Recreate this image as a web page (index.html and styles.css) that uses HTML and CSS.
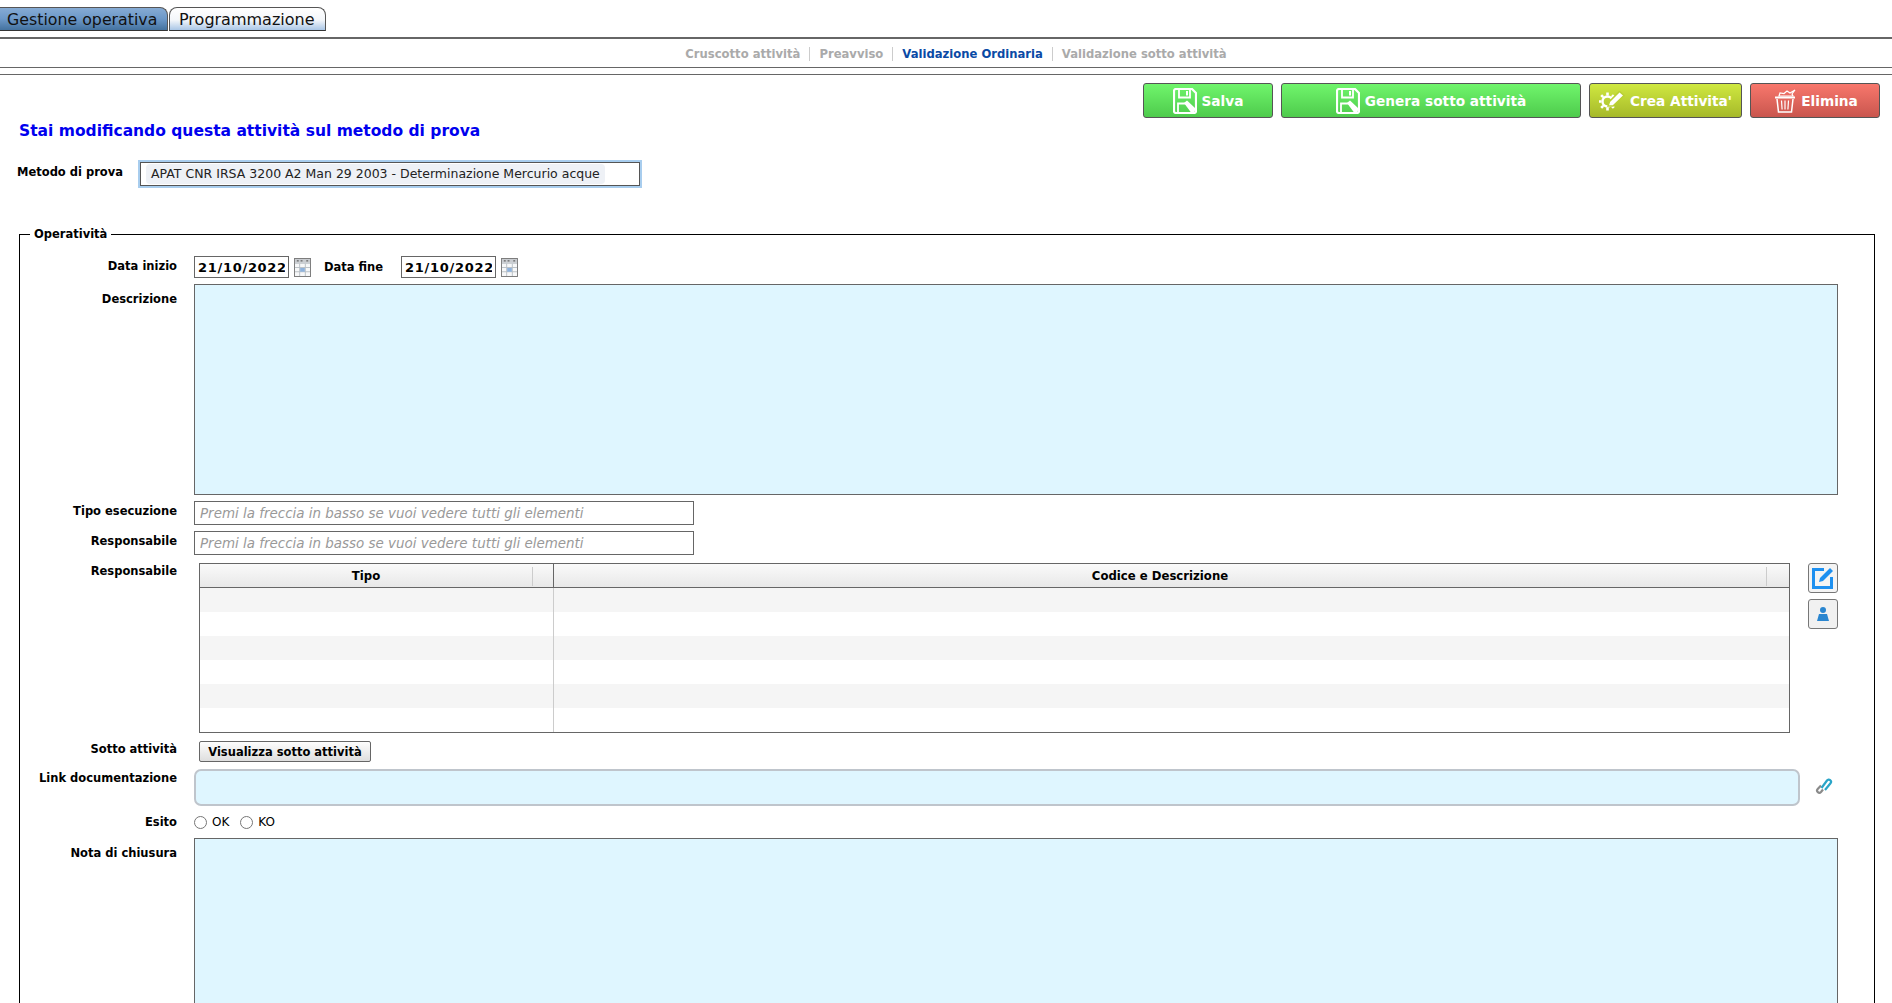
FILE: index.html
```html
<!DOCTYPE html>
<html lang="it">
  <head>
    <meta charset="UTF-8" />
    <title>Validazione Ordinaria</title>
    <link rel="stylesheet" href="styles.css">
  </head>
  <body>
    <div class="tabs">
      <a class="tab tab-active" href="#">Gestione operativa</a>
      <a class="tab tab-prog" href="#">Programmazione</a>
    </div>

    <div class="subnav">
      <a href="#">Cruscotto attività</a>
      <a href="#">Preavviso</a>
      <a class="current" href="#">Validazione Ordinaria</a>
      <a href="#">Validazione sotto attività</a>
    </div>

    <div class="toolbar">
      <button class="action green btn-salva">
        <svg class="action-icon" viewBox="0 0 24 26"><use href="#floppy" /></svg>
        Salva
      </button>
      <button class="action green btn-genera">
        <svg class="action-icon" viewBox="0 0 24 26"><use href="#floppy" /></svg>
        Genera sotto attività
      </button>
      <button class="action lime btn-crea">
        <svg class="icon-crea" viewBox="0 0 26 20">
          <circle cx="8.500" cy="10.500" r="5" fill="none" stroke="#fff" stroke-width="2.400" />
          <path d="M8.500 1.500v3M8.500 16.500v3M-.500 10.500h3M2.200 4.200l2 2M2.200 16.800l2-2M14.800 16.800l-2-2M14.800 4.200l-2 2" stroke="#fff" stroke-width="2.600" fill="none" />
          <path d="M9 15l1.500-4.500L20.500 .5l4.500 4L14 15z" fill="#fff" stroke="#b9d033" stroke-width="1.500" />
        </svg>
        Crea Attivita'
      </button>
      <button class="action red btn-elimina">
        <svg class="icon-elimina" viewBox="0 0 22 24">
          <path d="M1 8.500h20" stroke="#fff" stroke-width="2" fill="none" />
          <path d="M3 10l1.500 13h13L19 10" fill="none" stroke="#fff" stroke-width="1.500" />
          <path d="M7.500 11.500l.6 9M11 11.500v9M14.500 11.500l-.6 9" stroke="#fff" stroke-width="1.200" fill="none" />
          <path d="M5 7l1-3 4 .5L13 2l3 2 5-3-3 4 1 2z" fill="none" stroke="#fff" stroke-width="1.200" />
        </svg>
        Elimina
      </button>
    </div>

    <h1 class="title">Stai modificando questa attività sul metodo di prova</h1>

    <div class="metodo">
      <label class="metodo-label">Metodo di prova</label>
      <div class="metodo-box">
        <span class="chip">APAT CNR IRSA 3200 A2 Man 29 2003 - Determinazione Mercurio acque</span>
      </div>
    </div>

    <fieldset class="group">
      <legend>Operatività</legend>

      <div class="row row-date">
        <label class="lbl lbl-date">Data inizio</label>
        <input class="date" value="21/10/2022">
        <svg class="cal" viewBox="0 0 18 20"><use href="#calendar" /></svg>
        <label class="lbl-inline">Data fine</label>
        <input class="date" value="21/10/2022">
        <svg class="cal" viewBox="0 0 18 20"><use href="#calendar" /></svg>
      </div>

      <div class="row row-descr">
        <label class="lbl lbl-area">Descrizione</label>
        <textarea class="area area-descr"></textarea>
      </div>

      <div class="row row-combo">
        <label class="lbl lbl-combo">Tipo esecuzione</label>
        <input class="combo" placeholder="Premi la freccia in basso se vuoi vedere tutti gli elementi">
      </div>

      <div class="row row-combo">
        <label class="lbl lbl-combo">Responsabile</label>
        <input class="combo" placeholder="Premi la freccia in basso se vuoi vedere tutti gli elementi">
      </div>

      <div class="row row-grid">
        <label class="lbl lbl-top">Responsabile</label>
        <div class="grid">
          <div class="grid-head">
            <div class="cell-tipo"><span>Tipo</span></div>
            <div class="cell-cod"><span>Codice e Descrizione</span></div>
          </div>
          <div class="grid-row"><div class="cell-tipo"></div><div class="cell-cod"></div></div>
          <div class="grid-row"><div class="cell-tipo"></div><div class="cell-cod"></div></div>
          <div class="grid-row"><div class="cell-tipo"></div><div class="cell-cod"></div></div>
          <div class="grid-row"><div class="cell-tipo"></div><div class="cell-cod"></div></div>
          <div class="grid-row"><div class="cell-tipo"></div><div class="cell-cod"></div></div>
          <div class="grid-row"><div class="cell-tipo"></div><div class="cell-cod"></div></div>
        </div>
        <div class="side-btns">
          <button class="side-btn">
            <svg viewBox="0 0 24 24" width="24" height="24">
              <path d="M13 3.500H2.500v18h18V11" fill="none" stroke="#1e90f0" stroke-width="3" />
              <path d="M8 16l1-4L19 2l3 3-10 10z" fill="#1e90f0" />
            </svg>
          </button>
          <button class="side-btn side-btn-user">
            <svg viewBox="0 0 14 16" width="14" height="16">
              <circle cx="7" cy="4" r="3" fill="#2a86d0" />
              <path d="M3 8h8l2 7H1z" fill="#2a86d0" />
            </svg>
          </button>
        </div>
      </div>

      <div class="row row-sotto">
        <label class="lbl lbl-top">Sotto attività</label>
        <button class="plain-btn">Visualizza sotto attività</button>
      </div>

      <div class="row row-link">
        <label class="lbl lbl-link">Link documentazione</label>
        <input class="link-input">
        <svg class="clip" viewBox="0 0 18 18">
          <path d="M8 12.500l-2 2.500a2.200 2.200 0 0 1-3.300-3L6 8.500" fill="none" stroke="#8a8a8a" stroke-width="2.200" />
          <path d="M6.500 11l5.500-7.500a2.200 2.200 0 0 1 3.500 2.800L10 13" fill="none" stroke="#2aa5c8" stroke-width="2.200" />
        </svg>
      </div>

      <div class="row row-esito">
        <label class="lbl">Esito</label>
        <label class="radio"><input type="radio" name="esito"> OK</label>
        <label class="radio"><input type="radio" name="esito"> KO</label>
      </div>

      <div class="row">
        <label class="lbl lbl-area">Nota di chiusura</label>
        <textarea class="area area-nota"></textarea>
      </div>
    </fieldset>

    <svg class="defs" width="0" height="0">
      <defs>
        <g id="floppy">
          <path d="M1 3a2 2 0 0 1 2-2h16l4 4v18a2 2 0 0 1-2 2H3a2 2 0 0 1-2-2z" fill="none" stroke="#fff" stroke-width="2.200" />
          <path d="M6 1.500v8h11v-8" fill="none" stroke="#fff" stroke-width="1.800" />
          <path d="M13 3h2v4.500h-2z" fill="#fff" />
          <path d="M5 25v-9.500h9" fill="none" stroke="#fff" stroke-width="1.800" />
          <path d="M11 15l3-2.500 8.500 8-1 3.500-3.500 .5z" fill="#fff" />
        </g>
        <g id="calendar">
          <rect x="0.500" y="0.500" width="17" height="19" fill="#f7f8f9" stroke="#777" />
          <rect x="1" y="1" width="16" height="4" fill="#c9ccd0" />
          <path d="M3 3h2M7 3h2M13 3h2" stroke="#444" fill="none" />
          <path d="M1 5.500h16M1 10h16M1 14.500h16M6 6v13M12 6v13" stroke="#b9bfc5" fill="none" />
          <rect x="6.500" y="10.500" width="5" height="4" fill="#8fb2dc" />
        </g>
      </defs>
    </svg>
  </body>
</html>
```

FILE: styles.css
```css
html, body {
  height: 100%;
  overflow: hidden;
}

body {
  margin: 0;
  background: #fff;
  color: #000;
  font-family: "DejaVu Sans", Verdana, sans-serif;
  font-size: 11.500px;
}

/* top tabs */
.tabs {
  display: flex;
  height: 24px;
  padding-top: 7px;
  padding-bottom: 6px;
  border-bottom: 2px solid #666;
}

.tab {
  display: block;
  box-sizing: border-box;
  height: 24px;
  margin-right: 1px;
  padding: 0 0 0 9px;
  border: 1px solid #555;
  border-bottom-color: #333;
  border-radius: 8px 8px 0 0;
  background: linear-gradient(#ffffff, #f3f6fa 55%, #a9c6e6);
  color: #111;
  font-size: 16px;
  line-height: 24px;
  white-space: nowrap;
  overflow: hidden;
  text-decoration: none;
}

.tab-active {
  width: 168px;
  padding-left: 7px;
  border-left: 0;
  border-radius: 0 8px 0 0;
  background: linear-gradient(#86abd4, #6c98c8 50%, #44729f);
  font-size: 15.800px;
}

.tab-prog {
  width: 157px;
}

/* second level nav */
.subnav {
  display: flex;
  justify-content: center;
  align-items: center;
  height: 26px;
  padding-top: 2px;
  padding-left: 20px;
  border-bottom: 1px solid #666;
  font-size: 11.600px;
  font-weight: bold;
}

.subnav a {
  padding: 0 9px;
  border-right: 1px solid #ccc;
  color: #aaa;
  text-decoration: none;
}

.subnav a:last-child {
  border-right: 0;
}

.subnav a.current {
  color: #0a4aa5;
}

/* action buttons */
.toolbar {
  display: flex;
  justify-content: flex-end;
  gap: 8px;
  height: 35px;
  margin-top: 6px;
  padding-top: 8px;
  padding-right: 12px;
  border-top: 1px solid #666;
}

.action {
  display: flex;
  align-items: center;
  justify-content: center;
  gap: 5px;
  box-sizing: border-box;
  height: 35px;
  padding: 0;
  border: 1px solid #555;
  border-radius: 3px;
  color: #fff;
  font-family: inherit;
  font-size: 13.700px;
  font-weight: bold;
}

.action-icon {
  width: 24px;
  height: 26px;
}

.icon-crea {
  width: 26px;
  height: 20px;
}

.icon-elimina {
  width: 22px;
  height: 24px;
}

.green {
  background: linear-gradient(#70f56c, #4ecb4c);
}

.lime {
  background: linear-gradient(#cfe840, #a6b92a);
}

.red {
  background: linear-gradient(#f8776c, #c9564e);
}

.btn-salva {
  width: 130px;
}

.btn-genera {
  width: 300px;
}

.btn-crea {
  width: 153px;
}

.btn-elimina {
  width: 130px;
  padding-left: 2px;
}

.title {
  margin: 3px 0 0 19px;
  color: #0000ee;
  font-size: 15.500px;
  line-height: 20px;
}

.metodo {
  display: flex;
  align-items: flex-start;
  margin-top: 21px;
}

.metodo-label {
  width: 122px;
  margin-top: 3px;
  padding-left: 17px;
  box-sizing: border-box;
  font-weight: bold;
  white-space: nowrap;
}

.metodo-box {
  box-sizing: border-box;
  width: 500px;
  height: 24px;
  margin-left: 18px;
  padding: 1px 5px;
  border: 1px solid #555;
  box-shadow: 0 0 0 2px #a8cdee;
}

.chip {
  display: block;
  box-sizing: border-box;
  width: 459px;
  height: 20px;
  padding-left: 5px;
  border-radius: 4px;
  background: #eef1f6;
  color: #222;
  font-size: 12.500px;
  line-height: 20px;
  white-space: nowrap;
}

/* main group */
.group {
  box-sizing: border-box;
  width: 1856px;
  margin: 41px 0 0 19px;
  padding: 0;
  border: 1px solid #000;
  min-height: 900px;
}

.group legend {
  margin-left: 10px;
  padding: 0 4px;
  font-weight: bold;
}

.row {
  display: flex;
  align-items: flex-start;
}

.lbl {
  box-sizing: border-box;
  width: 157px;
  margin-right: 17px;
  text-align: right;
  font-weight: bold;
  line-height: 14px;
  flex: none;
}

.lbl-date {
  margin-bottom: 3px;
}

.lbl-area {
  margin-top: 8px;
}

.lbl-combo {
  margin-top: 3px;
}

.lbl-top {
  margin-top: 1px;
}

.lbl-link {
  margin-top: 2px;
}

.row-date {
  align-items: center;
  height: 22px;
  margin-top: 15px;
}

.date {
  box-sizing: border-box;
  width: 95px;
  height: 22px;
  padding: 0 3px;
  border: 1px solid #666;
  font-family: inherit;
  font-size: 13px;
  font-weight: bold;
  letter-spacing: 0.700px;
}

.cal {
  width: 17px;
  height: 19px;
  margin-left: 5px;
}

.lbl-inline {
  margin: 0 18px 0 13px;
  font-weight: bold;
}

.row-descr {
  margin-top: 6px;
}

.area {
  display: block;
  box-sizing: border-box;
  width: 1644px;
  margin: 0;
  border: 1px solid #666;
  background: #dff6ff;
  resize: none;
}

.area-descr {
  height: 211px;
}

.area-nota {
  height: 300px;
}

.row-combo {
  margin-top: 6px;
  height: 24px;
}

.combo {
  box-sizing: border-box;
  width: 500px;
  height: 24px;
  padding: 0 5px;
  border: 1px solid #666;
  font-family: inherit;
  font-size: 13.450px;
  font-style: italic;
}

.combo::placeholder {
  color: #999;
  opacity: 1;
}

/* table */
.row-grid {
  margin-top: 8px;
}

.grid {
  box-sizing: border-box;
  width: 1591px;
  height: 170px;
  margin-left: 5px;
  border: 1px solid #666;
}

.grid-head {
  display: flex;
  height: 23px;
  border-bottom: 1px solid #666;
  background: linear-gradient(#fafafa, #e8e8e8);
  font-weight: bold;
  font-size: 11.700px;
}

.grid-row {
  display: flex;
  height: 24px;
}

.grid-row:nth-child(even) {
  background: #f5f5f5;
}

.cell-tipo {
  box-sizing: border-box;
  width: 354px;
  border-right: 1px solid #ccc;
}

.grid-head .cell-tipo {
  border-right-color: #666;
}

.cell-cod {
  flex: 1;
}

.grid-head span {
  display: block;
  box-sizing: border-box;
  height: 19px;
  margin-top: 3px;
  border-right: 1px solid #ccc;
  line-height: 18px;
  text-align: center;
}

.grid-head .cell-tipo span {
  width: 333px;
}

.grid-head .cell-cod span {
  width: 1213px;
}

.side-btns {
  display: flex;
  flex-direction: column;
  gap: 6px;
  margin-left: 18px;
}

.side-btn {
  display: flex;
  align-items: center;
  justify-content: center;
  box-sizing: border-box;
  width: 30px;
  height: 30px;
  padding: 0;
  border: 1px solid #777;
  border-radius: 3px;
  background: #f4f4f4;
}

.side-btn-user {
  background: #f1f1f1;
}

.row-sotto {
  margin-top: 8px;
  height: 21px;
}

.plain-btn {
  box-sizing: border-box;
  width: 172px;
  height: 21px;
  margin-left: 5px;
  padding: 0;
  border: 1px solid #666;
  border-radius: 2px;
  background: linear-gradient(#fdfdfd, #dedede);
  font-family: inherit;
  font-size: 11.500px;
  font-weight: bold;
}

.row-link {
  margin-top: 7px;
}

.link-input {
  box-sizing: border-box;
  width: 1606px;
  height: 37px;
  border: 2px solid #bfc5cc;
  border-radius: 7px;
  background: #dff6ff;
}

.clip {
  width: 18px;
  height: 18px;
  margin: 8px 0 0 15px;
}

.row-esito {
  align-items: center;
  height: 18px;
  margin-top: 7px;
  margin-bottom: 7px;
}

.radio {
  display: flex;
  align-items: center;
  gap: 5px;
  margin-right: 11px;
  font-size: 12px;
}

.radio input {
  width: 13px;
  height: 13px;
  margin: 0;
}

.defs {
  position: absolute;
}
```
